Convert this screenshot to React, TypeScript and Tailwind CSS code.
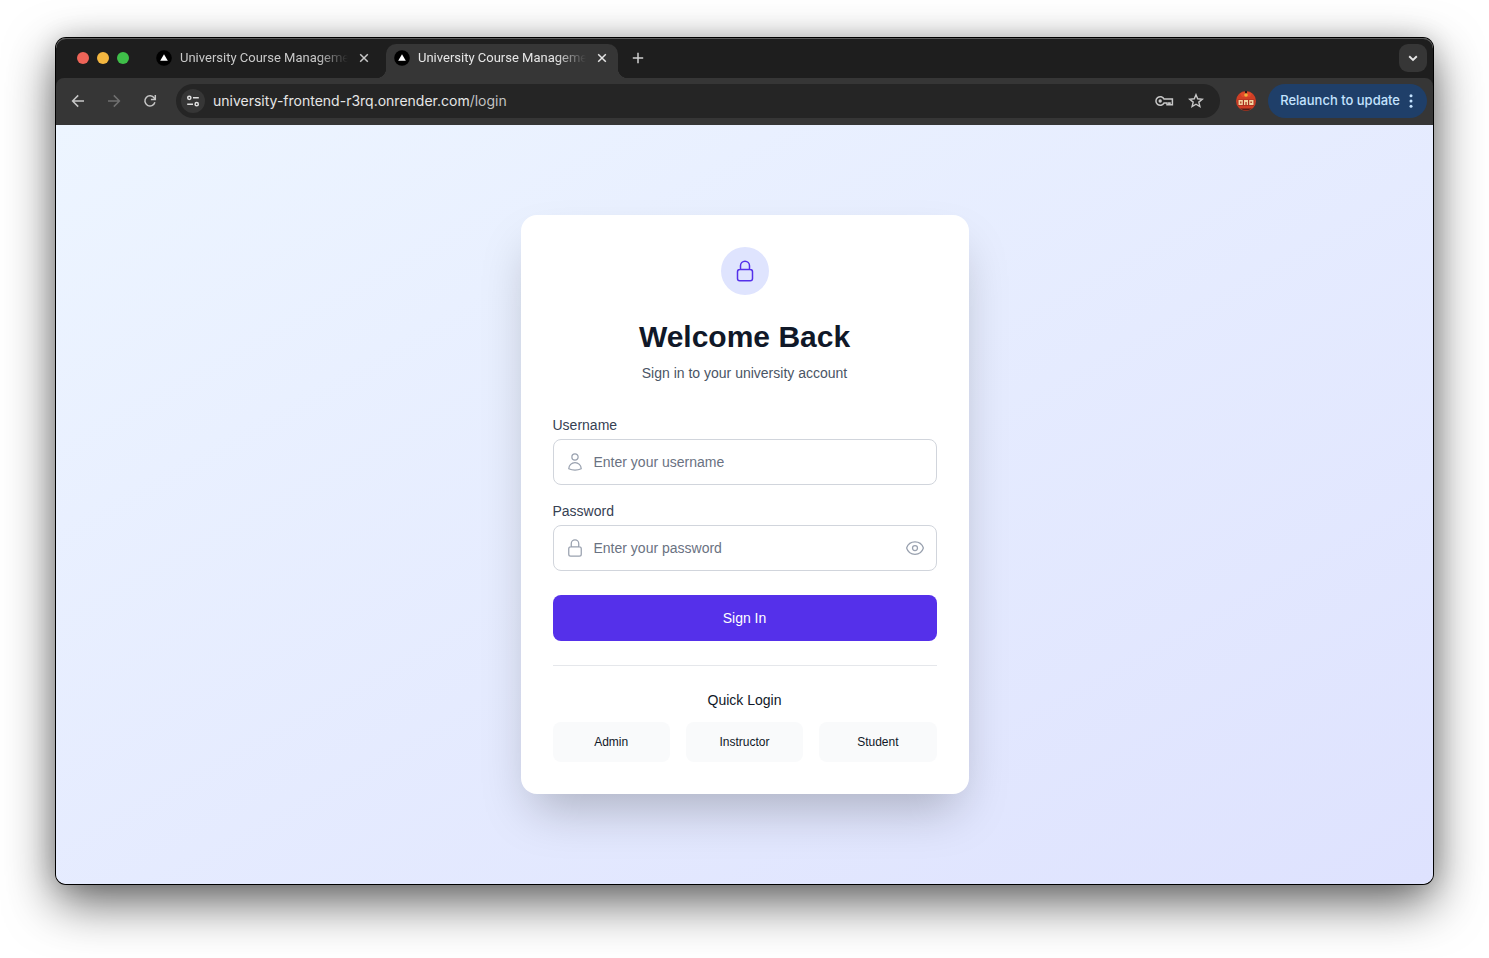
import { useState, type ReactNode } from "react";
import {
  HiOutlineEye,
  HiOutlineEyeSlash,
  HiOutlineLockClosed,
  HiOutlineUser,
} from "react-icons/hi2";

function SiteIcon() {
  return (
    <svg viewBox="0 0 16 16" className="size-4 shrink-0" aria-hidden="true">
      <circle cx="8" cy="8" r="7.8" fill="#000" />
      <path d="M8 4.3 11.8 10.8H4.2Z" fill="#fff" />
    </svg>
  );
}

function CloseIcon() {
  return (
    <svg viewBox="0 0 16 16" className="size-4" fill="none" stroke="currentColor" strokeWidth="1.5" aria-hidden="true">
      <path d="M4.2 4.2 11.8 11.8M11.8 4.2 4.2 11.8" />
    </svg>
  );
}

function BrowserTab({ title, active = false }: { title: string; active?: boolean }) {
  return (
    <div
      className={
        active
          ? "relative flex h-[34px] w-[232px] items-center rounded-t-[10px] bg-[#363636] px-2 pb-1.5 text-[#e6e6e6]"
          : "flex h-[34px] w-[238px] items-center pr-3.5 pl-2 pb-1.5 text-[#c9c9c9]"
      }
    >
      {active && (
        <>
          <span className="absolute bottom-0 -left-2.5 size-2.5 bg-[radial-gradient(circle_at_0_0,transparent_10px,#363636_10.5px)]" />
          <span className="absolute -right-2.5 bottom-0 size-2.5 bg-[radial-gradient(circle_at_100%_0,transparent_10px,#363636_10.5px)]" />
        </>
      )}
      <SiteIcon />
      <span className="ml-2 min-w-0 flex-1 overflow-hidden font-[Roboto,sans-serif] text-[13px] leading-4 whitespace-nowrap [mask-image:linear-gradient(to_right,#000_82%,transparent)]">
        {title}
      </span>
      <button type="button" aria-label="Close tab" className="ml-2">
        <CloseIcon />
      </button>
    </div>
  );
}

function BrowserChrome() {
  return (
    <header className="rounded-t-[10px] bg-[#1e1e1e] font-[Inter,sans-serif] shadow-[inset_0_1px_0_#5c5c5c]">
      <div className="flex h-10 items-end pr-1.5">
        <div className="flex gap-2 self-center pl-[21px]">
          <span className="size-3 rounded-full bg-[#ee6458]" />
          <span className="size-3 rounded-full bg-[#f4b740]" />
          <span className="size-3 rounded-full bg-[#3fbf49]" />
        </div>
        <div className="ml-[19px] flex">
          <BrowserTab title="University Course Manageme" />
          <BrowserTab title="University Course Manageme" active />
        </div>
        <button type="button" aria-label="New tab" className="mb-3 ml-3 text-[#d0d0d0]">
          <svg viewBox="0 0 16 16" className="size-4" fill="none" stroke="currentColor" strokeWidth="1.5" aria-hidden="true">
            <path d="M8 2.8V13.2M2.8 8H13.2" />
          </svg>
        </button>
        <button
          type="button"
          aria-label="Search tabs"
          className="mb-1.5 ml-auto flex size-7 items-center justify-center rounded-[9px] bg-[#363636] text-[#e6e6e6]"
        >
          <svg viewBox="0 0 16 16" className="size-4" fill="none" stroke="currentColor" strokeWidth="1.9" aria-hidden="true">
            <path d="M4.2 6.2 8 9.9 11.8 6.2" />
          </svg>
        </button>
      </div>

      <div className="flex h-[47px] items-center rounded-t-[8px] bg-[#363636] pr-1.5 pl-3.5 pb-px">
        <div className="flex items-center gap-5 text-[#c7c7c7]">
          <button type="button" aria-label="Back">
            <svg viewBox="0 0 16 16" className="size-4" fill="none" stroke="currentColor" strokeWidth="1.5" aria-hidden="true">
              <path d="M14 8H2.8M8.2 2.4 2.6 8 8.2 13.6" />
            </svg>
          </button>
          <button type="button" aria-label="Forward" className="text-[#707070]">
            <svg viewBox="0 0 16 16" className="size-4" fill="none" stroke="currentColor" strokeWidth="1.5" aria-hidden="true">
              <path d="M2 8H13.2M7.8 2.4 13.4 8 7.8 13.6" />
            </svg>
          </button>
          <button type="button" aria-label="Reload">
            <svg viewBox="0 0 16 16" className="size-4" fill="none" stroke="currentColor" strokeWidth="1.5" aria-hidden="true">
              <path d="M12.9 9.3A5.1 5.1 0 1 1 12.2 5L13 6.2" />
              <path d="M13.3 2V6.4H8.9" />
            </svg>
          </button>
        </div>

        <div className="ml-[18px] flex h-[34px] min-w-0 flex-1 items-center rounded-full bg-[#252525] pr-4 pl-[5px]">
          <button
            type="button"
            aria-label="View site information"
            className="flex size-6 shrink-0 items-center justify-center rounded-full bg-[#363636] text-[#e0e0e0]"
          >
            <svg viewBox="0 0 16 16" className="size-4" fill="none" stroke="currentColor" strokeWidth="1.5" aria-hidden="true">
              <circle cx="4.3" cy="4.8" r="1.6" />
              <path d="M8 4.8H13.8M2.2 11.2H8" />
              <circle cx="11.7" cy="11.2" r="1.6" />
            </svg>
          </button>
          <p className="ml-2 min-w-0 flex-1 truncate text-sm text-[#e6e6e6]">
            university-frontend-r3rq.onrender.com<span className="text-[#c2c2c2]">/login</span>
          </p>
          <div className="flex items-center gap-3.5 text-[#c7c7c7]">
            <button type="button" aria-label="Manage passwords">
              <svg viewBox="0 0 20 16" className="h-4 w-5" fill="none" stroke="currentColor" strokeWidth="1.5" aria-hidden="true">
                <path d="M10.1 6.1A4.3 4.3 0 1 0 10.1 9.9H13V11.7H14.8V9.9H16V11.7H18.4V6.1Z" />
                <circle cx="6.2" cy="8" r="1.7" fill="currentColor" stroke="none" />
              </svg>
            </button>
            <button type="button" aria-label="Bookmark this page">
              <svg viewBox="0 0 16 16" className="size-4" fill="none" stroke="currentColor" strokeWidth="1.4" aria-hidden="true">
                <path d="M8 1.7 9.7 5.8 14.3 6.2 10.8 9.1 11.9 13.6 8 11.2 4.1 13.6 5.2 9.1 1.7 6.2 6.3 5.8Z" />
              </svg>
            </button>
          </div>
        </div>

        <button type="button" aria-label="Profile" className="ml-4">
          <svg viewBox="0 0 20 20" className="size-5" aria-hidden="true">
            <circle cx="10" cy="10" r="10" fill="#cf3f25" />
            <path d="M4 2.5Q10-1 16 2.5L14 6H6Z" fill="#e0492a" />
            <path d="M9 0H11V2.5H9Z" fill="#2b1712" />
            <circle cx="10" cy="4" r="1.8" fill="#f0b23c" />
            <path d="M1.5 8.4H18.5L18 14.8H2Z" fill="#a92b1c" />
            <path d="M2.5 9H6.8V14H2.5ZM8 9H12V14H8ZM13.2 9H17.5V14H13.2Z" fill="#f3d3a0" />
            <path d="M4 10.5H5.5V12.5H4ZM9.3 11H10.8V14H9.3ZM14.3 10.5H16V12H14.3Z" fill="#b44a2b" />
            <path d="M4 17.5Q10 21.5 16 17.5Z" fill="#571b13" />
          </svg>
        </button>
        <button
          type="button"
          className="ml-3 flex h-[34px] items-center rounded-full bg-[#1f3f69] pr-2 pl-3 text-[13px] font-medium whitespace-nowrap text-[#c4e3ff]"
        >
          Relaunch to update
          <svg viewBox="0 0 16 16" className="ml-[3px] size-4" fill="currentColor" aria-hidden="true">
            <circle cx="8" cy="2.8" r="1.5" />
            <circle cx="8" cy="8" r="1.5" />
            <circle cx="8" cy="13.2" r="1.5" />
          </svg>
        </button>
      </div>
    </header>
  );
}

interface FieldProps {
  id: string;
  label: string;
  type: string;
  placeholder: string;
  icon: ReactNode;
  action?: ReactNode;
}

function Field({ id, label, type, placeholder, icon, action }: FieldProps) {
  return (
    <div>
      <label htmlFor={id} className="mb-1 block text-sm text-[#364153]">
        {label}
      </label>
      <div className="relative">
        <span className="pointer-events-none absolute inset-y-0 left-0 flex items-center pl-3 text-[#99a1af]">{icon}</span>
        <input
          id={id}
          type={type}
          placeholder={placeholder}
          className="block w-full rounded-lg border border-[#d1d5dc] bg-white px-10 py-3 text-sm text-[#101828] outline-none placeholder:text-[#6a7282] focus:border-[#5530ea]"
        />
        {action}
      </div>
    </div>
  );
}

const roles = ["Admin", "Instructor", "Student"];

function LoginCard() {
  const [visible, setVisible] = useState(false);

  return (
    <section className="w-full max-w-md rounded-2xl bg-white p-8 shadow-2xl">
      <div className="mb-8 text-center">
        <div className="mx-auto mb-6 flex size-12 items-center justify-center rounded-full bg-[#dfe4fe] text-[#5530ea]">
          <HiOutlineLockClosed className="size-6" />
        </div>
        <h1 className="text-3xl font-bold text-[#101828]">Welcome Back</h1>
        <p className="mt-2 text-sm text-[#4a5565]">Sign in to your university account</p>
      </div>

      <form onSubmit={(event) => event.preventDefault()}>
        <div className="flex flex-col gap-4">
          <Field
            id="username"
            label="Username"
            type="text"
            placeholder="Enter your username"
            icon={<HiOutlineUser className="size-5" />}
          />
          <Field
            id="password"
            label="Password"
            type={visible ? "text" : "password"}
            placeholder="Enter your password"
            icon={<HiOutlineLockClosed className="size-5" />}
            action={
              <button
                type="button"
                aria-label={visible ? "Hide password" : "Show password"}
                onClick={() => setVisible(!visible)}
                className="absolute inset-y-0 right-0 flex items-center pr-3 text-[#99a1af]"
              >
                {visible ? <HiOutlineEyeSlash className="size-5" /> : <HiOutlineEye className="size-5" />}
              </button>
            }
          />
        </div>
        <button type="submit" className="mt-6 w-full rounded-lg bg-[#5530ea] py-[13px] text-sm text-white">
          Sign In
        </button>
      </form>

      <div className="mt-6 border-t border-[#e5e7eb] pt-6">
        <h2 className="mb-3 text-center text-sm text-[#101828]">Quick Login</h2>
        <div className="grid grid-cols-3 gap-4">
          {roles.map((role) => (
            <button key={role} type="button" className="rounded-lg bg-[#f9fafb] py-3 text-xs text-[#101828]">
              {role}
            </button>
          ))}
        </div>
      </div>
    </section>
  );
}

export default function App() {
  return (
    <div className="flex min-h-screen flex-col bg-white px-14 pt-[38px] pb-[74px]">
      <div className="flex flex-1 flex-col rounded-[10px] shadow-[0_0_0_1px_#000,0_18px_50px_rgba(0,0,0,0.62),0_0_24px_rgba(0,0,0,0.15)]">
        <BrowserChrome />
        <main className="flex flex-1 items-center justify-center rounded-b-[10px] bg-linear-to-br from-[#edf5ff] to-[#dee2fe] p-6 font-['Liberation_Sans',Arial,sans-serif]">
          <LoginCard />
        </main>
      </div>
    </div>
  );
}
